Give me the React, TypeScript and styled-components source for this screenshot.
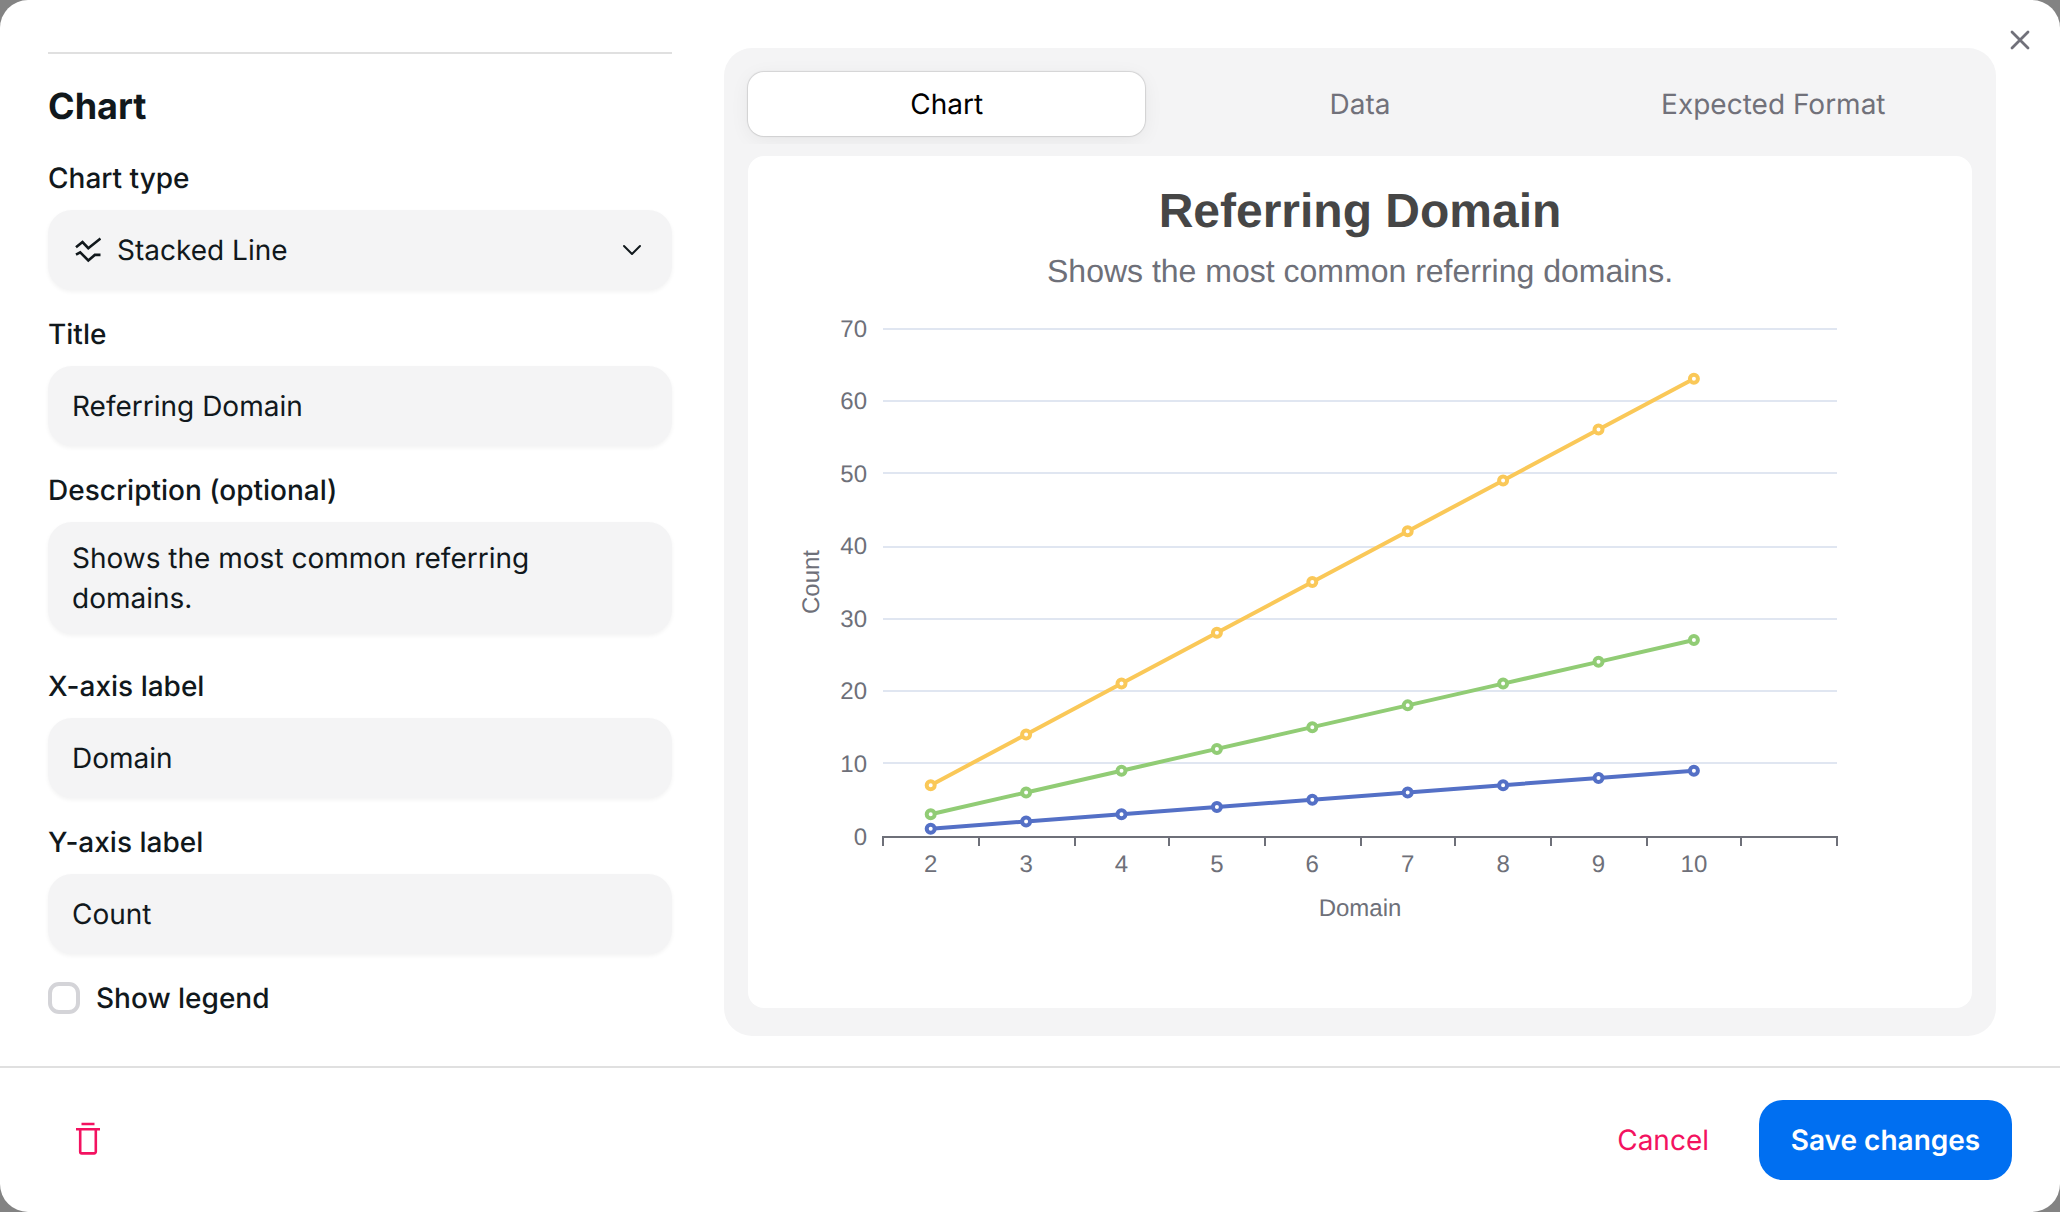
import React from "react";
import styled, { createGlobalStyle } from "styled-components";

const GlobalStyle = createGlobalStyle`
  *, *::before, *::after { box-sizing: border-box; }
  body {
    margin: 0;
    background: #838383;
    font-family: Inter, "Liberation Sans", sans-serif;
    text-rendering: geometricPrecision;
  }
  button, input, textarea { font: inherit; color: inherit; border: 0; margin: 0; text-rendering: inherit; }
`;

const Dialog = styled.main`
  width: 2060px;
  height: 1212px;
  display: flex;
  flex-direction: column;
  background: #fff;
  border-radius: 28px;
  overflow: hidden;
  color: #11181c;
  font-size: 28px;
  line-height: 40px;
`;

const Body = styled.div`
  height: 1066px;
  display: flex;
  padding-left: 48px;
`;

const Form = styled.form`
  width: 624px;
  margin-top: 52px;
  border-top: 2px solid #e0e0e0;
  display: flex;
  flex-direction: column;
`;

const Heading = styled.h2`
  margin: 28px 0 0;
  font-size: 36px;
  line-height: 48px;
  font-weight: 700;
`;

const Field = styled.label<{ $top?: number }>`
  display: flex;
  flex-direction: column;
  gap: 12px;
  margin-top: ${(p) => p.$top ?? 24}px;
`;

const Label = styled.span`
  font-weight: 500;
`;

const fieldBox = `
  width: 100%;
  border-radius: 24px;
  background: #f4f4f5;
  box-shadow: 0 2px 4px rgba(0, 0, 0, 0.05);
  outline: none;
`;

const Select = styled.button`
  ${fieldBox}
  height: 80px;
  display: flex;
  align-items: center;
  gap: 16px;
  padding: 0 30px 0 27px;
  text-align: left;
`;

const SelectValue = styled.span`
  flex: 1;
`;

const Input = styled.input`
  ${fieldBox}
  height: 80px;
  padding: 0 24px;
`;

const TextArea = styled.textarea`
  ${fieldBox}
  display: block;
  height: 112px;
  padding: 16px 24px;
  resize: none;
  overflow: hidden;
`;

const CheckRow = styled.label`
  display: flex;
  align-items: center;
  gap: 16px;
  margin-top: 24px;
  font-weight: 500;
`;

const CheckBox = styled.span`
  width: 32px;
  height: 32px;
  border: 4px solid #d4d4d8;
  border-radius: 11px;
`;

const Preview = styled.section`
  width: 1272px;
  height: 988px;
  margin: 48px 0 0 52px;
  padding: 0 24px 28px;
  border-radius: 28px;
  background: #f4f4f5;
  display: flex;
  flex-direction: column;
`;

const Tabs = styled.div`
  display: grid;
  grid-template-columns: repeat(3, 1fr);
  gap: 16px;
  height: 96px;
  margin: 0 -24px 12px;
  padding: 24px 24px 8px;
  overflow: hidden;
`;

const Tab = styled.button<{ $active?: boolean }>`
  padding: 0;
  border-radius: 16px;
  background: ${(p) => (p.$active ? "#fff" : "transparent")};
  color: ${(p) => (p.$active ? "#000" : "#71717a")};
  box-shadow: ${(p) => (p.$active ? "0 0 1px 1px rgba(0,0,0,.12), 0 4px 20px rgba(0,0,0,.06)" : "none")};
`;

const ChartCard = styled.div`
  height: 852px;
  border-radius: 16px;
  background: #fff;
  overflow: hidden;
`;

const ChartSvg = styled.svg`
  display: block;
  font-family: "Liberation Sans", Arial, sans-serif;
  font-size: 24px;
  fill: #6e7079;
`;

const CloseColumn = styled.div`
  flex: 1;
  display: flex;
  justify-content: flex-end;
  align-items: flex-start;
  padding: 26px 26px 0 0;
`;

const IconButton = styled.button`
  display: flex;
  padding: 0;
  background: none;
`;

const Footer = styled.footer`
  flex: 1;
  display: flex;
  align-items: center;
  border-top: 2px solid #e0e0e0;
  padding: 0 48px 0 72px;
`;

const CancelButton = styled.button`
  margin-left: auto;
  padding: 0 50px;
  background: none;
  color: #f31260;
`;

const SaveButton = styled.button`
  width: 253px;
  height: 80px;
  padding: 0;
  border-radius: 24px;
  background: #006ff1;
  color: #fff;
  font-weight: 600;
`;

const StackedLineIcon = () => (
  <svg width="26" height="28" viewBox="0 0 26 28" fill="none" stroke="#11181c" strokeWidth="2.6">
    <path d="M1 11.3 7.5 6 13.3 12.2 25.5 2.6" />
    <path d="M1 18.6 5.2 16.3 13.3 24.5 19.8 18.9H25.5" />
  </svg>
);

const ChevronIcon = () => (
  <svg width="20" height="12" viewBox="0 0 20 12" fill="none" stroke="#11181c" strokeWidth="2" strokeLinecap="round" strokeLinejoin="round">
    <path d="M2 2 10 10 18 2" />
  </svg>
);

const CloseIcon = () => (
  <svg width="28" height="28" viewBox="0 0 28 28" stroke="#71717a" strokeWidth="2.8" strokeLinecap="round">
    <path d="M6 6 22 22M22 6 6 22" />
  </svg>
);

const TrashIcon = () => (
  <svg width="32" height="36" viewBox="0 0 32 36" fill="none" stroke="#f31260" strokeWidth="2.6">
    <path d="M9.5 2H22.5" />
    <path d="M4 7.2H28" />
    <path d="M8.2 7.2V29.8a1.6 1.6 0 0 0 1.6 1.6H22.2A1.6 1.6 0 0 0 23.8 29.8V7.2" />
  </svg>
);

const LEFT = 135;
const STEP = 95.4;
const BASE = 680;
const UNIT = 7.257;
const GRID = [
  { value: 70, y: 173 },
  { value: 60, y: 245 },
  { value: 50, y: 317 },
  { value: 40, y: 391 },
  { value: 30, y: 463 },
  { value: 20, y: 535 },
  { value: 10, y: 607 },
];
const TICKS = [135, 231, 327, 421, 517, 613, 707, 803, 899, 993, 1089];
const CATEGORIES = [2, 3, 4, 5, 6, 7, 8, 9, 10];
const SERIES = [
  { color: "#5470c6", factor: 1 },
  { color: "#91cc75", factor: 3 },
  { color: "#fac858", factor: 7 },
];

const Chart = () => (
  <ChartSvg width="1224" height="852" viewBox="0 0 1224 852">
    <text x="612" y="71" textAnchor="middle" fontSize="48" fontWeight="700" fill="#464646">
      Referring Domain
    </text>
    <text x="612" y="126" textAnchor="middle" fontSize="32">
      Shows the most common referring domains.
    </text>
    {GRID.map((g) => (
      <line key={g.value} x1={LEFT} x2={1089} y1={g.y} y2={g.y} stroke="#e0e6f1" strokeWidth="2" />
    ))}
    {[0, 10, 20, 30, 40, 50, 60, 70].map((v) => (
      <text key={v} x="119" y={BASE - v * UNIT + 8.5} textAnchor="end">
        {v}
      </text>
    ))}
    <line x1={LEFT - 1} x2={1090} y1={681} y2={681} stroke="#6e7079" strokeWidth="2" />
    {TICKS.map((x) => (
      <line key={x} x1={x} x2={x} y1={680} y2={690} stroke="#6e7079" strokeWidth="2" />
    ))}
    {CATEGORIES.map((c, i) => (
      <text key={c} x={LEFT + STEP * (i + 0.5)} y="716" textAnchor="middle">
        {c}
      </text>
    ))}
    <text x="612" y="760" textAnchor="middle">Domain</text>
    <text transform="translate(71 426) rotate(-90)" textAnchor="middle">Count</text>
    {SERIES.map((s) => {
      const points = CATEGORIES.map((_, i) => [LEFT + STEP * (i + 0.5), BASE - (i + 1) * s.factor * UNIT]);
      return (
        <g key={s.color} stroke={s.color}>
          <polyline points={points.map((p) => p.join(",")).join(" ")} fill="none" strokeWidth="4" strokeLinejoin="bevel" />
          {points.map(([x, y]) => (
            <circle key={x} cx={x} cy={y} r="4" fill="#fff" strokeWidth="4" />
          ))}
        </g>
      );
    })}
  </ChartSvg>
);

export default function App() {
  return (
    <>
      <GlobalStyle />
      <Dialog>
        <Body>
          <Form>
            <Heading>Chart</Heading>
            <Field $top={28}>
              <Label>Chart type</Label>
              <Select type="button">
                <StackedLineIcon />
                <SelectValue>Stacked Line</SelectValue>
                <ChevronIcon />
              </Select>
            </Field>
            <Field>
              <Label>Title</Label>
              <Input defaultValue="Referring Domain" />
            </Field>
            <Field>
              <Label>Description (optional)</Label>
              <TextArea defaultValue="Shows the most common referring domains." />
            </Field>
            <Field $top={32}>
              <Label>X-axis label</Label>
              <Input defaultValue="Domain" />
            </Field>
            <Field>
              <Label>Y-axis label</Label>
              <Input defaultValue="Count" />
            </Field>
            <CheckRow>
              <CheckBox />
              Show legend
            </CheckRow>
          </Form>
          <Preview>
            <Tabs>
              <Tab $active>Chart</Tab>
              <Tab>Data</Tab>
              <Tab>Expected Format</Tab>
            </Tabs>
            <ChartCard>
              <Chart />
            </ChartCard>
          </Preview>
          <CloseColumn>
            <IconButton aria-label="Close">
              <CloseIcon />
            </IconButton>
          </CloseColumn>
        </Body>
        <Footer>
          <IconButton aria-label="Delete">
            <TrashIcon />
          </IconButton>
          <CancelButton>Cancel</CancelButton>
          <SaveButton>Save changes</SaveButton>
        </Footer>
      </Dialog>
    </>
  );
}
